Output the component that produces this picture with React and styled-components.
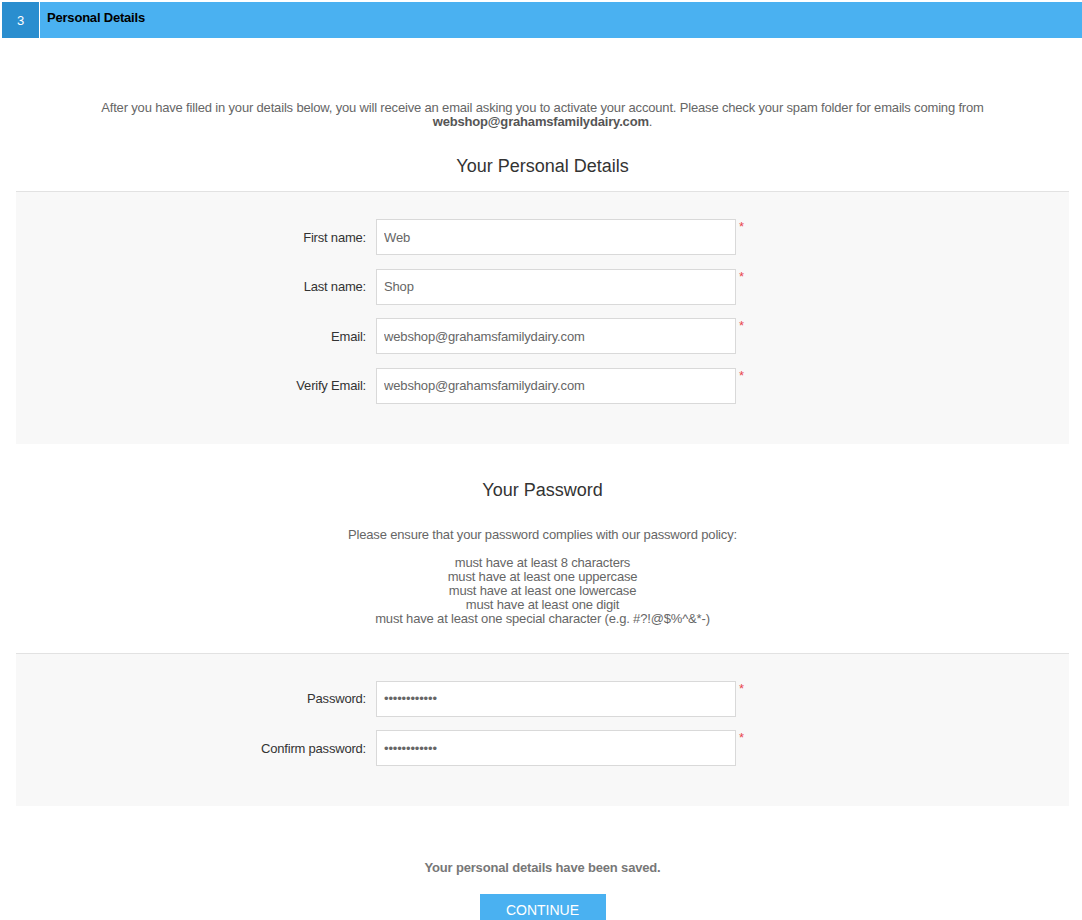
import styled, { createGlobalStyle } from "styled-components";

const GlobalStyle = createGlobalStyle`
  body {
    margin: 0;
    background: #fff;
    font-family: "Liberation Sans", Arial, sans-serif;
  }
`;

const personalFields = [
  { label: "First name:", value: "Web" },
  { label: "Last name:", value: "Shop" },
  { label: "Email:", value: "webshop@grahamsfamilydairy.com" },
  { label: "Verify Email:", value: "webshop@grahamsfamilydairy.com" },
];

const passwordFields = [
  { label: "Password:", value: "abcdefghijkl", secret: true },
  { label: "Confirm password:", value: "abcdefghijkl", secret: true },
];

const rules = [
  "must have at least 8 characters",
  "must have at least one uppercase",
  "must have at least one lowercase",
  "must have at least one digit",
  "must have at least one special character (e.g. #?!@$%^&*-)",
];

function FieldRow({ label, value, secret }) {
  return (
    <Row>
      <Label>{label}</Label>
      <InputWrap>
        <Input type={secret ? "password" : "text"} defaultValue={value} />
        <Required>*</Required>
      </InputWrap>
    </Row>
  );
}

export default function App() {
  return (
    <>
      <GlobalStyle />
      <Page>
        <StepBar>
          <StepNumber>3</StepNumber>
          <StepTitle>Personal Details</StepTitle>
        </StepBar>

        <Content>
          <Intro>
            After you have filled in your details below, you will receive an
            email asking you to activate your account. Please check your spam
            folder for emails coming from
            <br />
            <b>webshop@grahamsfamilydairy.com</b>.
          </Intro>

          <Heading $top={25}>Your Personal Details</Heading>
          <Panel $top={13}>
            {personalFields.map((f) => (
              <FieldRow key={f.label} {...f} />
            ))}
          </Panel>

          <Heading $top={34}>Your Password</Heading>
          <Policy>Please ensure that your password complies with our password policy:</Policy>
          <RuleList>
            {rules.map((r) => (
              <li key={r}>{r}</li>
            ))}
          </RuleList>
          <Panel $top={27}>
            {passwordFields.map((f) => (
              <FieldRow key={f.label} {...f} />
            ))}
          </Panel>

          <Saved>Your personal details have been saved.</Saved>
          <Actions>
            <ContinueButton>CONTINUE</ContinueButton>
          </Actions>
        </Content>
      </Page>
    </>
  );
}

const Page = styled.div`
  padding: 2px 0 0 2px;
`;

const StepBar = styled.div`
  display: flex;
  height: 36px;
  background: #4ab1f1;
`;

const StepNumber = styled.div`
  width: 37px;
  display: flex;
  align-items: center;
  justify-content: center;
  background: #2a8ecf;
  border-right: 1px solid #fff;
  color: #fff;
  font-size: 13px;
`;

const StepTitle = styled.div`
  display: flex;
  align-items: center;
  padding-left: 7px;
  padding-bottom: 5px;
  font-size: 13px;
  font-weight: bold;
  letter-spacing: -0.2px;
  color: #000;
`;

const Content = styled.div`
  padding: 0 13px 0 14px;
`;

const Intro = styled.p`
  margin: 63px 0 0;
  text-align: center;
  font-size: 13px;
  line-height: 14px;
  letter-spacing: -0.17px;
  color: #666;

  b {
    color: #555;
  }
`;

const Heading = styled.h2`
  margin: ${({ $top }) => $top}px 0 0;
  text-align: center;
  font-size: 18px;
  font-weight: normal;
  line-height: 24px;
  color: #333;
`;

const Panel = styled.div`
  margin-top: ${({ $top }) => $top}px;
  padding: 27px 0 40px;
  display: flex;
  flex-direction: column;
  gap: 13.5px;
  background: #f8f8f8;
  border-top: 1px solid #e2e2e2;
`;

const Row = styled.div`
  display: flex;
  align-items: center;
`;

const Label = styled.label`
  width: 350px;
  padding-right: 10px;
  text-align: right;
  font-size: 13px;
  letter-spacing: -0.2px;
  color: #333;
`;

const InputWrap = styled.div`
  position: relative;
  display: flex;
`;

const Input = styled.input`
  box-sizing: border-box;
  width: 360px;
  height: 36px;
  padding: 0 7px;
  border: 1px solid #d9d9d9;
  background: #fff;
  font-family: "Liberation Sans", Arial, sans-serif;
  font-size: 13px;
  letter-spacing: -0.15px;
  color: #666;
  outline: none;
`;

const Required = styled.span`
  position: absolute;
  left: 363px;
  top: 1px;
  font-size: 13px;
  line-height: 13px;
  color: #e8474f;
`;

const Policy = styled.p`
  margin: 26px 0 0;
  text-align: center;
  font-size: 13px;
  line-height: 14px;
  letter-spacing: -0.17px;
  color: #666;
`;

const RuleList = styled.ul`
  margin: 14px 0 0;
  padding: 0;
  list-style: none;
  text-align: center;
  font-size: 13px;
  line-height: 14px;
  letter-spacing: -0.17px;
  color: #666;
`;

const Saved = styled.p`
  margin: 55px 0 0;
  text-align: center;
  font-size: 13px;
  font-weight: bold;
  line-height: 14px;
  letter-spacing: -0.17px;
  color: #777;
`;

const Actions = styled.div`
  display: flex;
  justify-content: center;
  margin-top: 19px;
`;

const ContinueButton = styled.button`
  width: 126px;
  height: 34px;
  border: none;
  background: #4ab1f1;
  color: #fff;
  font-family: "Liberation Sans", Arial, sans-serif;
  font-size: 14px;
  padding-bottom: 3px;
  cursor: pointer;
`;
